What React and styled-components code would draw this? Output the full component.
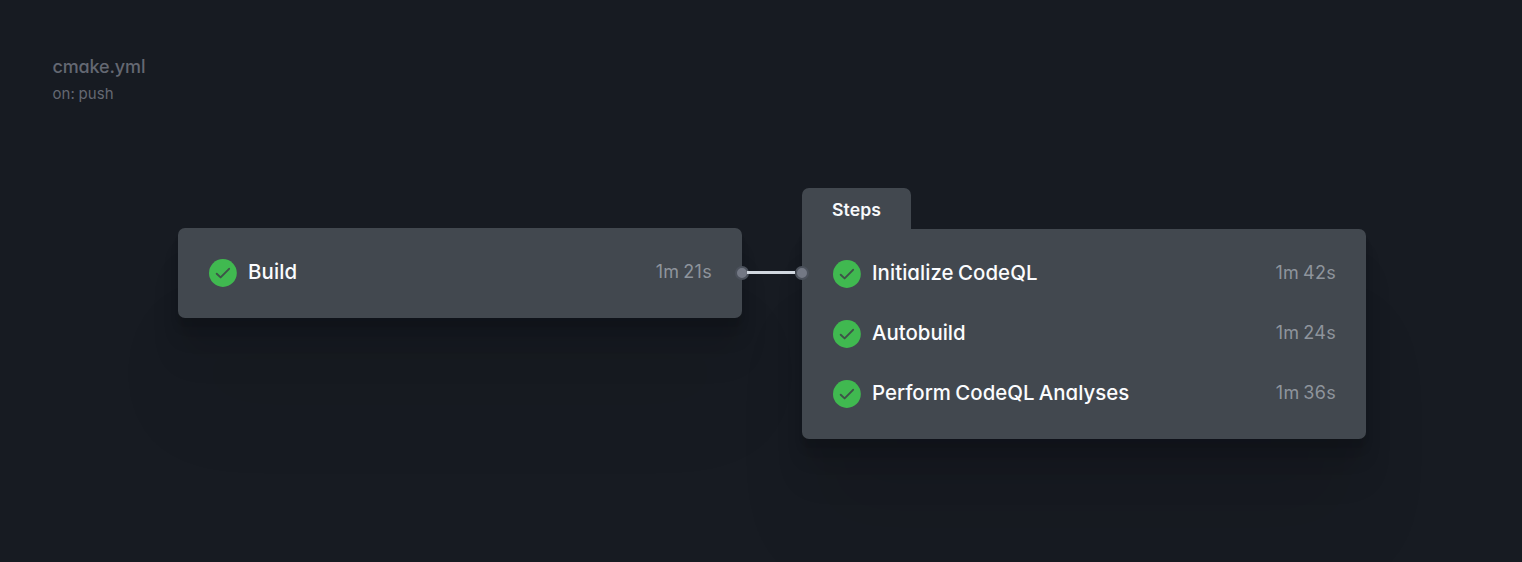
import React from "react";
import styled, { createGlobalStyle } from "styled-components";

const GlobalStyle = createGlobalStyle`
  * { box-sizing: border-box; }
  body {
    margin: 0;
    background: #171b22;
    font-family: Inter, "Liberation Sans", sans-serif;
    font-feature-settings: "cv11";
  }
`;

const Page = styled.main`
  height: 562px;
  overflow: hidden;
  padding: 55px 52px 0;
  background: #171b22;
`;

const Header = styled.header`
  height: 133px;
  padding-left: 0.4px;
  color: #646872;
`;

const FileName = styled.h1`
  margin: 0;
  font-size: 18px;
  font-weight: 540;
  line-height: 24px;
  letter-spacing: -0.12px;
`;

const Trigger = styled.p`
  margin: 3px 0 0;
  font-size: 15px;
  font-weight: 430;
  line-height: 24px;
  word-spacing: -1px;
  letter-spacing: 0.15px;
`;

const Flow = styled.section`
  display: flex;
  align-items: flex-start;
  padding-left: 126px;
`;

const Card = styled.div`
  width: 564px;
  padding: 31px 30px 31px 31px;
  margin-top: ${(p) => p.$top || 0}px;
  border-radius: ${(p) => (p.$tabbed ? "0 7px 7px 7px" : "7px")};
  background: #42484f;
  box-shadow: 0 100px 80px rgba(4, 6, 12, 0.05),
    0 42px 33px rgba(4, 6, 12, 0.06), 0 22px 18px rgba(4, 6, 12, 0.07),
    0 12px 10px rgba(4, 6, 12, 0.06), 0 6px 5px rgba(4, 6, 12, 0.04);
`;

const Group = styled.div`
  width: 564px;
`;

const Tab = styled.div`
  position: relative;
  width: 109px;
  height: 42px;
  margin-bottom: -1px;
  padding: 10px 0 0 30px;
  border-radius: 7px 7px 0 0;
  background: #42484f;
  color: #f7f9fb;
  font-size: 17.6px;
  font-weight: 570;
  line-height: 24px;
  letter-spacing: 0.08px;
`;

const Row = styled.div`
  display: flex;
  align-items: center;
  height: 28px;
  & + & { margin-top: 32px; }
`;

const Badge = styled.svg`
  width: 28px;
  height: 28px;
  margin-right: 11px;
  flex: none;
`;

const Name = styled.span`
  margin-top: -2px;
  color: #fbfcfe;
  font-size: 20.4px;
  font-weight: 540;
  line-height: 28px;
  word-spacing: -1px;
  letter-spacing: ${(p) => p.$tracking}px;
`;

const Duration = styled.span`
  margin: -2px 0 0 auto;
  color: #8e949c;
  font-size: 18px;
  font-weight: 430;
  line-height: 28px;
  word-spacing: -1.4px;
  letter-spacing: 0.28px;
`;

const Connector = styled.div`
  position: relative;
  z-index: 1;
  display: flex;
  align-items: center;
  width: 74px;
  height: 14px;
  margin: 78px -7px 0;
`;

const Port = styled.span`
  width: 14px;
  height: 14px;
  flex: none;
  border: 2px solid #4b515b;
  border-radius: 50%;
  background: #737884;
`;

const Line = styled.span`
  flex: 1;
  height: 3px;
  margin: 0 0 1px -2px;
  background: #d1d7df;
`;

function Job({ name, time, tracking = 0 }) {
  return (
    <Row>
      <Badge viewBox="0 0 28 28" aria-hidden="true">
        <circle cx="13.9" cy="14" r="13.9" fill="#40b950" />
        <path d="M7.7 14.7 11.6 18.4 20.1 9.8" fill="none" stroke="#3d5348" strokeWidth="1.9" strokeLinecap="round" strokeLinejoin="round" />
      </Badge>
      <Name $tracking={tracking}>{name}</Name>
      <Duration>{time}</Duration>
    </Row>
  );
}

export default function App() {
  return (
    <>
      <GlobalStyle />
      <Page>
        <Header>
          <FileName>cmake.yml</FileName>
          <Trigger>on: push</Trigger>
        </Header>
        <Flow>
          <Card $top={40}>
            <Job name="Build" time="1m 21s" tracking={0.15} />
          </Card>
          <Connector>
            <Port />
            <Line />
            <Port />
          </Connector>
          <Group>
            <Tab>Steps</Tab>
            <Card $tabbed>
              <Job name="Initialize CodeQL" time="1m 42s" tracking={0.06} />
              <Job name="Autobuild" time="1m 24s" />
              <Job name="Perform CodeQL Analyses" time="1m 36s" />
            </Card>
          </Group>
        </Flow>
      </Page>
    </>
  );
}
